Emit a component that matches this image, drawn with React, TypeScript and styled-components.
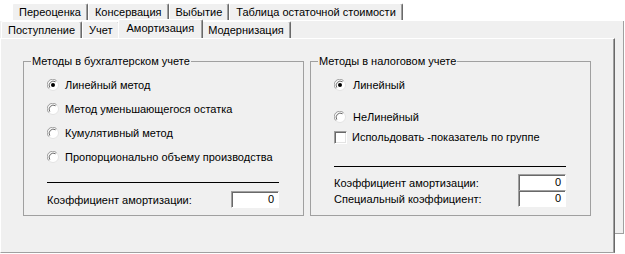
import styled, { createGlobalStyle, css } from 'styled-components'

const GlobalStyle = createGlobalStyle`
  html, body { margin: 0; padding: 0; background: #fff; }
`

const Page = styled.div`
  width: 625px;
  height: 254px;
  overflow: hidden;
  background: #fff;
  font: 11px 'Liberation Sans', Arial, sans-serif;
  color: #000;
`

const TopRow = styled.div`
  display: flex;
  align-items: flex-end;
  height: 20px;
  padding-left: 12px;
  box-sizing: border-box;
`

const Tab = styled.div<{ $active?: boolean }>`
  display: flex;
  align-items: center;
  height: 17px;
  box-sizing: border-box;
  padding: 0 6px 1px 6px;
  background: #f0f0f0;
  border-top: 1px solid #fff;
  border-left: 1px solid #fff;
  border-right: 1px solid #696969;
  box-shadow: inset -1px 0 0 #a0a0a0;
  border-radius: 2px 2px 0 0;
  white-space: nowrap;

  ${({ $active }) =>
    $active &&
    css`
      position: relative;
      z-index: 2;
      height: 20px;
      margin: 0 -2px -1px;
      padding: 0 8px 3px 8px;
    `}
`

const Stack = styled.div`
  position: relative;
  height: 234px;

  &::before {
    content: '';
    position: absolute;
    left: 0;
    top: 1px;
    width: 624px;
    height: 213px;
    box-sizing: border-box;
    background: #f0f0f0;
    border-right: 1px solid #a0a0a0;
    border-bottom: 1px solid #a0a0a0;
  }
`

const SecondRow = styled.div`
  position: relative;
  z-index: 1;
  display: flex;
  align-items: flex-end;
  height: 18px;
  padding-left: 1px;
`

const Sheet = styled.div`
  position: relative;
  z-index: 1;
  display: flex;
  align-items: flex-start;
  gap: 6px;
  width: 615px;
  height: 215px;
  box-sizing: border-box;
  padding: 16px 0 0 22px;
  background: #f0f0f0;
  border-top: 1px solid #fff;
  border-left: 1px solid #fff;
  border-right: 1px solid #696969;
  border-bottom: 1px solid #a0a0a0;
  box-shadow: inset -1px 0 0 #a0a0a0;
`

const Group = styled.fieldset`
  width: 281px;
  margin: 0;
  padding: 0;
  box-sizing: border-box;
  border: 1px solid #a0a0a0;
  min-inline-size: 0;
`

const Legend = styled.legend`
  margin-left: 7px;
  padding: 0 1px;
  line-height: 13px;
`

const GroupBody = styled.div<{ $bottom: number }>`
  display: flex;
  flex-direction: column;
  padding: 9px 0 ${({ $bottom }) => $bottom}px 23px;
`

const OptionRow = styled.div<{ $gap?: number; $top?: number }>`
  display: flex;
  align-items: center;
  gap: ${({ $gap }) => $gap ?? 6}px;
  height: 16px;
  margin-top: ${({ $top }) => $top ?? 0}px;
  white-space: nowrap;
`

const Rule = styled.div<{ $top: number }>`
  width: 232px;
  height: 1px;
  margin-top: ${({ $top }) => $top}px;
  background: #000;
`

const FieldRow = styled.div<{ $top: number }>`
  display: flex;
  align-items: center;
  justify-content: space-between;
  width: 232px;
  height: 17px;
  margin-top: ${({ $top }) => $top}px;
`

const Field = styled.div`
  width: 48px;
  height: 17px;
  box-sizing: border-box;
  padding-right: 4px;
  background: #fff;
  border-top: 1px solid #a0a0a0;
  border-left: 1px solid #a0a0a0;
  border-right: 1px solid #fff;
  border-bottom: 1px solid #fff;
  box-shadow: inset 1px 1px 0 #696969;
  text-align: right;
  line-height: 15px;
`

const Check = styled.span`
  width: 13px;
  height: 13px;
  box-sizing: border-box;
  background: #fff;
  border-top: 1px solid #a0a0a0;
  border-left: 1px solid #a0a0a0;
  border-right: 1px solid #fff;
  border-bottom: 1px solid #fff;
  box-shadow: inset 1px 1px 0 #696969, inset -1px -1px 0 #e3e3e3;
  flex-shrink: 0;
`

function Radio({ checked }: { checked?: boolean }) {
  return (
    <svg width="12" height="12" viewBox="0 0 12 12" style={{ flexShrink: 0 }}>
      <circle cx="6" cy="6" r="5.5" fill="#fff" stroke="#e3e3e3" />
      <path d="M1.8 9.6 A5.3 5.3 0 0 1 9.6 1.8" fill="none" stroke="#a0a0a0" />
      <path d="M2.8 8.6 A4.2 4.2 0 0 1 8.6 2.8" fill="none" stroke="#696969" />
      {checked && <circle cx="6" cy="6" r="2" fill="#000" />}
    </svg>
  )
}

export default function App() {
  return (
    <Page>
      <GlobalStyle />
      <TopRow>
        <Tab>Переоценка</Tab>
        <Tab>Консервация</Tab>
        <Tab>Выбытие</Tab>
        <Tab>Таблица остаточной стоимости</Tab>
      </TopRow>
      <Stack>
        <SecondRow>
          <Tab>Поступление</Tab>
          <Tab>Учет</Tab>
          <Tab $active>Амортизация</Tab>
          <Tab>Модернизация</Tab>
        </SecondRow>
        <Sheet>
          <Group>
            <Legend>Методы в бухгалтерском учете</Legend>
            <GroupBody $bottom={7}>
              <OptionRow>
                <Radio checked />
                Линейный метод
              </OptionRow>
              <OptionRow $top={8}>
                <Radio />
                Метод уменьшающегося остатка
              </OptionRow>
              <OptionRow $top={8}>
                <Radio />
                Кумулятивный метод
              </OptionRow>
              <OptionRow $top={8}>
                <Radio />
                Пропорционально объему производства
              </OptionRow>
              <Rule $top={17} />
              <FieldRow $top={8}>
                <span>Коэффициент амортизации:</span>
                <Field>0</Field>
              </FieldRow>
            </GroupBody>
          </Group>
          <Group>
            <Legend>Методы в налоговом учете</Legend>
            <GroupBody $bottom={8}>
              <OptionRow $gap={7}>
                <Radio checked />
                Линейный
              </OptionRow>
              <OptionRow $gap={7} $top={16}>
                <Radio />
                НеЛинейный
              </OptionRow>
              <OptionRow $gap={5} $top={4}>
                <Check />
                Испольдовать -показатель по группе
              </OptionRow>
              <Rule $top={21} />
              <FieldRow $top={7}>
                <span>Коэффициент амортизации:</span>
                <Field>0</Field>
              </FieldRow>
              <FieldRow $top={-1}>
                <span>Специальный коэффициент:</span>
                <Field>0</Field>
              </FieldRow>
            </GroupBody>
          </Group>
        </Sheet>
      </Stack>
    </Page>
  )
}
